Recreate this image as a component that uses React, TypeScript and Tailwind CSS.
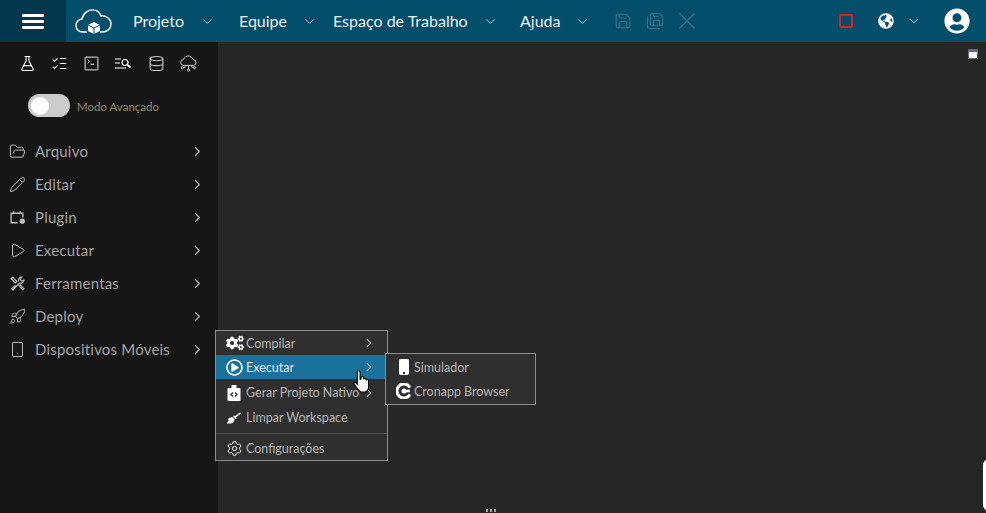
import type { ReactNode } from "react";
import {
  ChevronDown,
  ChevronRight,
  Database,
  FlaskConical,
  FolderOpen,
  ListChecks,
  Pencil,
  Play,
  Rocket,
  Save,
  SaveAll,
  Settings,
  Smartphone,
  SquareTerminal,
  X,
} from "lucide-react";
import { FaBroom, FaCogs, FaGlobeAmericas, FaRegPlayCircle, FaUserCircle } from "react-icons/fa";

const font = "font-['Lato','Noto_Sans',sans-serif]";

const topMenus = [
  { label: "Projeto", width: "w-[106px]", gap: "mr-[24px]" },
  { label: "Equipe", width: "w-[94px]", gap: "mr-[16px]" },
  { label: "Espaço de Trabalho", width: "w-[187px]", gap: "mr-[22px]" },
  { label: "Ajuda", width: "w-[85px]", gap: "mr-[15px]" },
];

const sideItems = [
  { label: "Arquivo", icon: FolderOpen },
  { label: "Editar", icon: Pencil },
  { label: "Plugin", icon: PluginIcon },
  { label: "Executar", icon: Play },
  { label: "Ferramentas", icon: ToolsIcon },
  { label: "Deploy", icon: Rocket },
  { label: "Dispositivos Móveis", icon: Smartphone },
];

function PluginIcon({ className }: { className?: string }) {
  return (
    <svg viewBox="0 0 16 16" fill="none" stroke="currentColor" strokeWidth="1.3" className={className}>
      <path d="M8 13H2V4h11v4" />
      <path d="M4.500 2v2M10.500 2v2" />
      <circle cx="12.500" cy="11.500" r="1.800" fill="currentColor" />
    </svg>
  );
}

function ToolsIcon({ className }: { className?: string }) {
  return (
    <svg viewBox="0 0 16 16" fill="none" stroke="currentColor" strokeWidth="1" className={className}>
      <path d="M2 3.500L3.500 2l4 4-1.500 1.500z" />
      <path d="M6 9.500l-3.500 3.500 1 1 3.500-3.500" />
      <path d="M14 4.500a3 3 0 0 1-4 3L4 13.500" />
      <path d="M14 4.500l-2 1.500-1.500-1.500 1.500-2.500a3 3 0 0 0-3 4" />
      <path d="M9 9.500l4 4.500 1-1-4-4.500" />
    </svg>
  );
}

function CloudLogo() {
  return (
    <svg viewBox="0 0 38 28" className="h-[28px] w-[38px]" fill="none" stroke="white" strokeWidth="1.400">
      <path d="M12 25H8a6.500 6.500 0 0 1-1-13c1-6 7-10 12-9 4 .5 6 3 7 6 5-1 10 3 10 8s-4 8-9 8h-2" />
      <path d="M19 15l6 3v6l-6 3-6-3v-6z" fill="white" stroke="none" />
      <path d="M13 18l6 3 6-3M19 21v6" stroke="#024e6b" strokeWidth="1" />
    </svg>
  );
}

function SearchList() {
  return (
    <svg viewBox="0 0 18 12" className="h-[12px] w-[18px]" fill="none" stroke="white" strokeWidth="1.200">
      <path d="M0 1h6M0 5h5M0 10h11" />
      <circle cx="10" cy="4.500" r="3" />
      <path d="M12.500 7l3 2.500" strokeWidth="1.800" />
    </svg>
  );
}

function CloudNodes() {
  return (
    <svg viewBox="0 0 18 18" className="h-[17px] w-[17px]" fill="none" stroke="#d4d4d4" strokeWidth="1">
      <path d="M5 11H4a3 3 0 0 1-.5-6C4.500 2 7 1 9 1s4 1.500 5 4a3 3 0 0 1 0 6H5z" />
      <path d="M9 11v4M5.500 11v2H3M12.500 11v2H15" />
      <circle cx="2.500" cy="13.500" r="1.200" />
      <circle cx="9" cy="16" r="1.200" />
      <circle cx="15.500" cy="13.500" r="1.200" />
    </svg>
  );
}

function NativeIcon() {
  return (
    <svg viewBox="0 0 16 16" className="h-[16px] w-[16px]">
      <path d="M5.500 0h5v3h3a1 1 0 0 1 1 1v11a1 1 0 0 1-1 1h-11a1 1 0 0 1-1-1V4a1 1 0 0 1 1-1h3z" fill="white" />
      <path d="M7 7.500L5 9.500l2 2M9 7.500l2 2-2 2" fill="none" stroke="#2f2f2f" strokeWidth="1.300" />
    </svg>
  );
}

function CronappIcon() {
  return (
    <svg viewBox="0 0 16 16" className="h-[16px] w-[16px]">
      <path d="M14 11.500A7 7 0 1 1 14 4.500" fill="none" stroke="white" strokeWidth="3" />
      <circle cx="8" cy="8" r="2.500" fill="white" />
      <path d="M8 6.700h6v2.600H8z" fill="white" />
    </svg>
  );
}

function MenuRow({
  icon,
  label,
  height,
  active,
  arrow,
}: {
  icon: ReactNode;
  label: string;
  height: string;
  active?: boolean;
  arrow?: boolean;
}) {
  return (
    <div className={`flex items-center pl-[10px] pr-[11px] text-[12.500px] ${height} ${active ? "bg-[#1a719c] text-[#e6e6e6]" : "text-[#b5b5b5]"}`}>
      <span className="flex w-[20px] justify-start text-white">{icon}</span>
      <span className="pt-[2px]">{label}</span>
      {arrow && <ChevronRight className="ml-auto h-[14px] w-[14px] text-[#b0b0b0]" strokeWidth={2} />}
    </div>
  );
}

export default function App() {
  return (
    <div className={`${font} relative flex h-[513px] w-[986px] flex-col overflow-hidden bg-[#262626]`}>
      {/* Top bar */}
      <header className="flex h-[42px] items-center bg-[#024e6b] text-white">
        <div className="flex h-full w-[66px] flex-col items-center justify-center gap-[3px] bg-[#03374e]">
          <span className="h-[3px] w-[22px] rounded-[1px] bg-white" />
          <span className="h-[3px] w-[22px] rounded-[1px] bg-white" />
          <span className="h-[3px] w-[22px] rounded-[1px] bg-white" />
        </div>
        <div className="ml-[9px] flex w-[58px] items-center">
          <CloudLogo />
        </div>
        {topMenus.map((m) => (
          <div key={m.label} className={`flex items-center ${m.width} text-[16px] text-[#e8f0f4]`}>
            <span>{m.label}</span>
            <ChevronDown className={`ml-auto h-[15px] w-[15px] ${m.gap}`} strokeWidth={1.300} />
          </div>
        ))}
        <div className="ml-[9px] flex items-center text-[#3b6f87]">
          <Save className="h-[18px] w-[18px]" strokeWidth={1.600} />
          <SaveAll className="ml-[14px] h-[18px] w-[18px]" strokeWidth={1.600} />
          <X className="ml-[9px] h-[28px] w-[28px]" strokeWidth={1.200} />
        </div>
        <div className="ml-auto flex items-center">
          <div className="h-[14px] w-[14px] rounded-[2px] border-2 border-[#d3222a]" />
          <FaGlobeAmericas className="ml-[25px] h-[16px] w-[16px]" />
          <ChevronDown className="ml-[13px] h-[14px] w-[14px]" strokeWidth={1.300} />
          <FaUserCircle className="ml-[23px] mr-[16px] h-[26px] w-[26px]" />
        </div>
      </header>

      <div className="flex flex-1">
        {/* Sidebar */}
        <aside className="w-[218px] bg-[#161616]">
          <div className="flex h-[43px] items-center gap-[15px] pl-[19px] text-white">
            <FlaskConical className="h-[17px] w-[17px]" strokeWidth={1.500} />
            <ListChecks className="h-[17px] w-[17px]" strokeWidth={1.500} />
            <SquareTerminal className="h-[17px] w-[17px]" strokeWidth={1.300} />
            <SearchList />
            <Database className="h-[17px] w-[17px] text-[#c8c8c8]" strokeWidth={1.500} />
            <CloudNodes />
          </div>
          <div className="flex items-center pl-[28px] pt-[9px]">
            <div className="flex h-[23px] w-[42px] items-center rounded-full bg-[#cccccc] pl-[3px]">
              <div className="h-[18px] w-[18px] rounded-full bg-white" />
            </div>
            <span className="ml-[7px] pt-[2px] text-[11.500px] text-[#8c8a6e]">Modo Avançado</span>
          </div>
          <nav className="mt-[18px]">
            {sideItems.map((item) => {
              const Icon = item.icon;
              return (
                <div key={item.label} className="flex h-[33px] items-center pl-[9px] pr-[13px] text-[15px] tracking-[0.2px] text-[#a3a3a3]">
                  <Icon className="h-[17px] w-[17px] text-[#c0c0c0]" strokeWidth={1.400} />
                  <span className="ml-[9px]">{item.label}</span>
                  <ChevronRight className="ml-auto h-[15px] w-[15px] text-[#b0b0b0]" strokeWidth={2} />
                </div>
              );
            })}
          </nav>
        </aside>
        <main className="flex-1" />
      </div>

      {/* Corner widgets */}
      <div className="absolute right-[8px] top-[49px] h-[10px] w-[10px] border border-t-[3px] border-[#67677f] bg-white" />
      <div className="absolute bottom-[1px] left-[486px] flex gap-[2px]">
        <span className="h-[3px] w-[2px] bg-[#a8a8a8]" />
        <span className="h-[3px] w-[2px] bg-[#a8a8a8]" />
        <span className="h-[3px] w-[2px] bg-[#a8a8a8]" />
      </div>
      <div className="absolute right-[-12px] top-[459px] h-[52px] w-[15px] rounded-[6px] bg-white" />

      {/* Context menu */}
      <div className="absolute left-[215px] top-[330px] w-[173px] border border-[#8c8c8c] bg-[#2f2f2f]">
        <MenuRow height="h-[24px]" icon={<FaCogs className="h-[16px] w-[18px]" />} label="Compilar" arrow />
        <MenuRow height="h-[24px]" icon={<FaRegPlayCircle className="h-[17px] w-[17px]" />} label="Executar" active arrow />
        <MenuRow height="h-[26px] pt-[1px]" icon={<NativeIcon />} label="Gerar Projeto Nativo" arrow />
        <MenuRow height="h-[25px]" icon={<FaBroom className="ml-[1px] h-[14px] w-[14px]" />} label="Limpar Workspace" />
        <div className="mt-[3px] border-t border-[#4a4a4a] pt-[2px]">
          <MenuRow height="h-[24px]" icon={<Settings className="h-[17px] w-[17px]" strokeWidth={1.300} />} label="Configurações" />
        </div>
      </div>

      {/* Submenu */}
      <div className="absolute left-[385px] top-[353px] w-[151px] border border-[#8c8c8c] bg-[#2f2f2f] py-[1px]">
        <div className="flex h-[24px] items-center pl-[13px] text-[12.500px] text-[#b5b5b5]">
          <span className="flex h-[16px] w-[10px] items-end justify-center rounded-[2px] bg-white pb-[1px]">
            <span className="h-[2px] w-[2px] bg-[#2f2f2f]" />
          </span>
          <span className="ml-[5px] pt-[2px]">Simulador</span>
        </div>
        <div className="flex h-[24px] items-center pl-[10px] text-[12.500px] text-[#b5b5b5]">
          <CronappIcon />
          <span className="ml-[2px] pt-[2px]">Cronapp Browser</span>
        </div>
      </div>

      {/* Cursor */}
      <svg viewBox="0 0 16 22" className="absolute left-[353px] top-[370px] h-[23px] w-[17px]">
        <path
          d="M4 2a1.300 1.300 0 0 1 2.600 0v7l1-.3V7.500a1.200 1.200 0 0 1 2.400 0v1.500a1.200 1.200 0 0 1 2.400.3v.7a1.200 1.200 0 0 1 2.400.5v5c0 2.500-1.500 5-3.500 5.500H7.500C6 20.500 5 19 3.500 17L1 13.500c-.7-1 .5-2.300 1.500-1.500L4 13.500z"
          fill="white"
          stroke="black"
          strokeWidth="1"
        />
      </svg>
    </div>
  );
}
